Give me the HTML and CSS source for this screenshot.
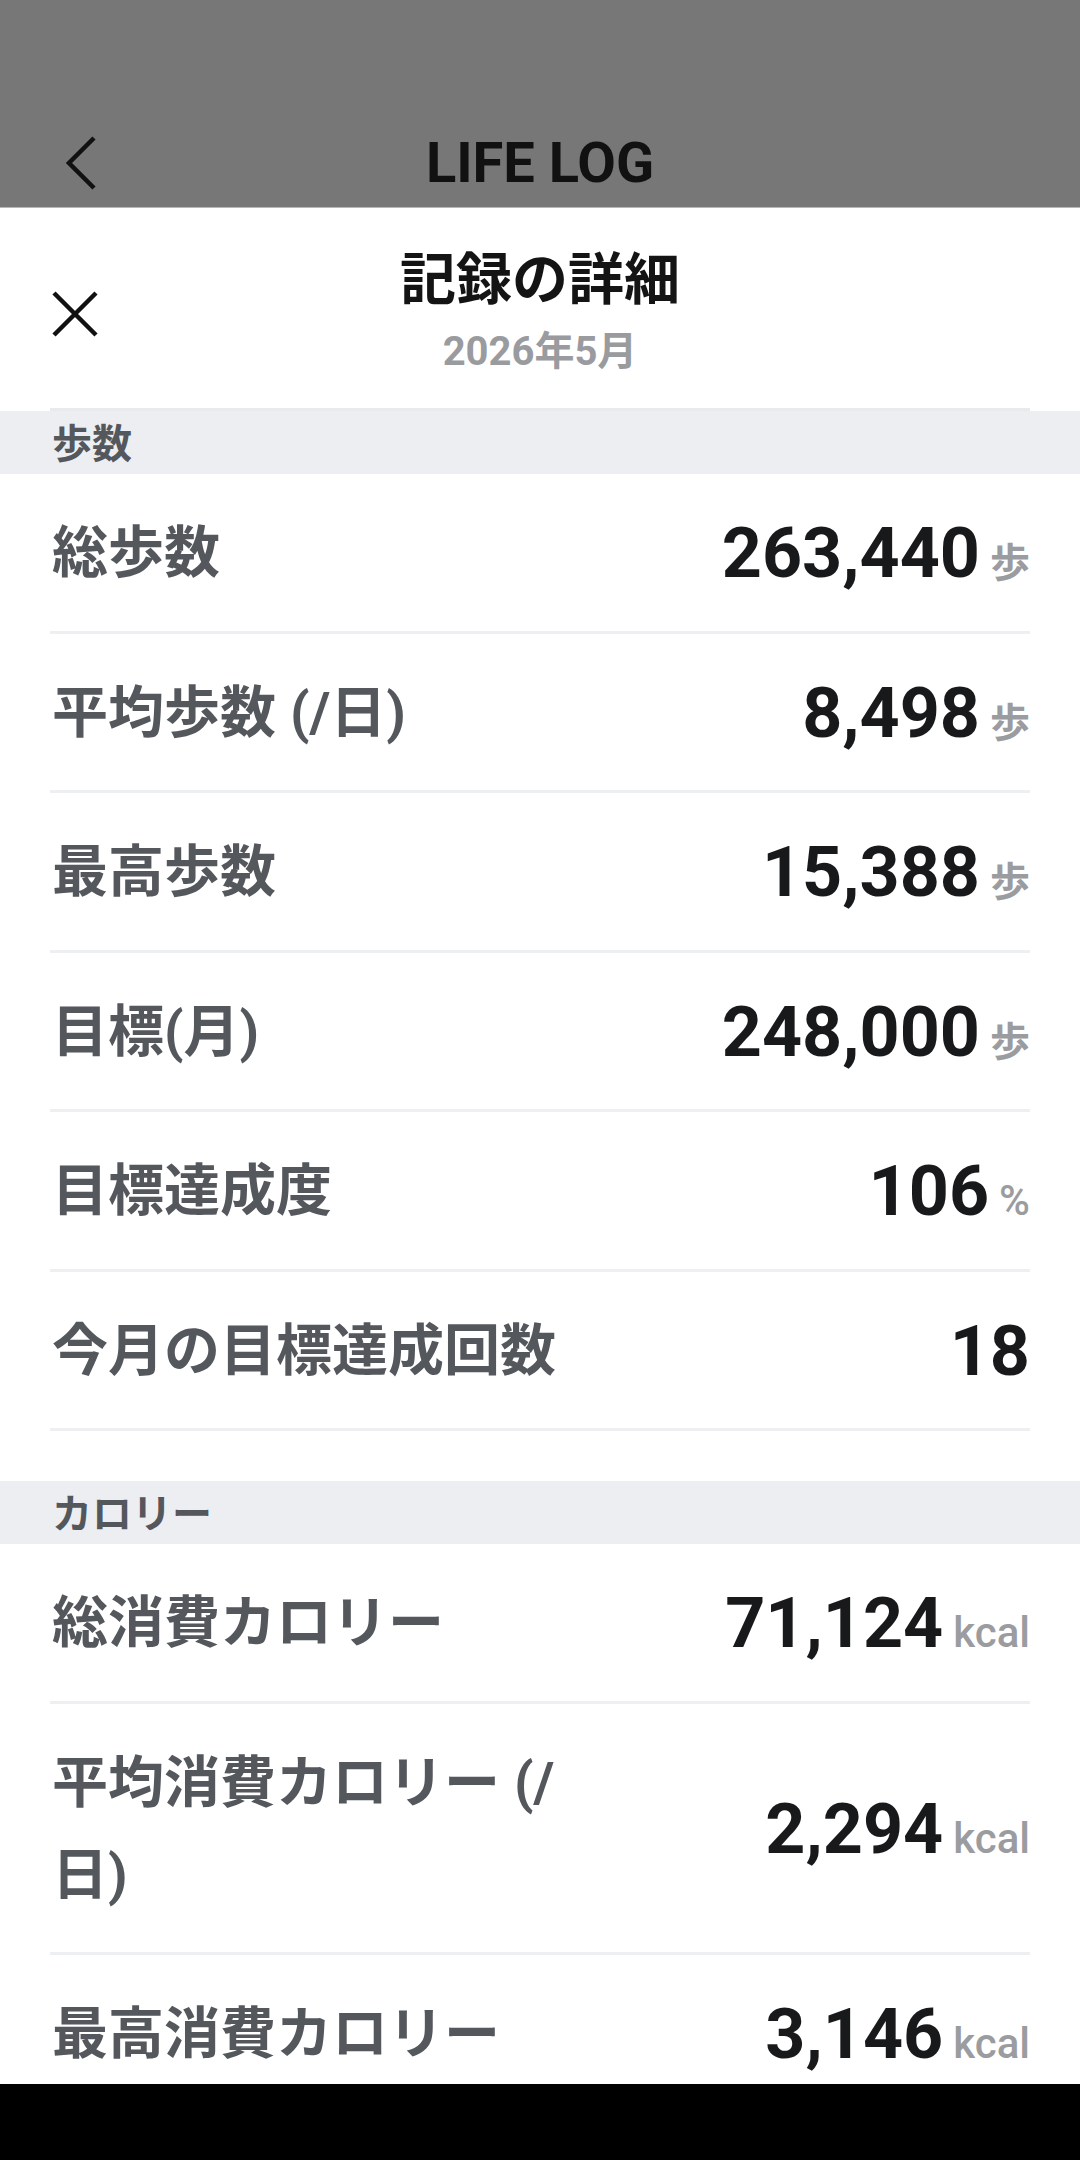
FILE: index.html
```html
<!DOCTYPE html>
<html lang="ja">
<head>
<meta charset="utf-8">
<title>記録の詳細</title>
<link rel="stylesheet" href="styles.css">
</head>
<body>
<div class="screen">
  <header class="appbar">
    <div class="toolbar">
      <span class="back">
        <svg width="32" height="54" viewBox="0 0 32 54"><path d="M29 2 L4 27 L29 52" fill="none" stroke="#111" stroke-width="4.5"/></svg>
      </span>
      <span class="apptitle">LIFE LOG</span>
      <span></span>
    </div>
  </header>

  <main class="sheet">
    <div class="sheet-head">
      <span class="close">
        <svg width="48" height="48" viewBox="0 0 48 48"><path d="M3 3 L45 45 M45 3 L3 45" fill="none" stroke="#111" stroke-width="4.5"/></svg>
      </span>
      <div class="heading">
        <div class="title">記録の詳細</div>
        <div class="date">2026年5月</div>
      </div>
      <span></span>
    </div>
    <div class="head-rule"></div>

    <section class="group">
      <div class="band">歩数</div>
      <div class="row"><span class="label">総歩数</span><span class="val"><b>263,440</b><i>歩</i></span></div>
      <div class="row"><span class="label">平均歩数 (/日)</span><span class="val"><b>8,498</b><i>歩</i></span></div>
      <div class="row"><span class="label">最高歩数</span><span class="val"><b>15,388</b><i>歩</i></span></div>
      <div class="row"><span class="label">目標(月)</span><span class="val"><b>248,000</b><i>歩</i></span></div>
      <div class="row"><span class="label">目標達成度</span><span class="val"><b>106</b><i class="latin">%</i></span></div>
      <div class="row"><span class="label">今月の目標達成回数</span><span class="val"><b>18</b></span></div>
    </section>

    <section class="group">
      <div class="band">カロリー</div>
      <div class="row"><span class="label">総消費カロリー</span><span class="val"><b>71,124</b><i class="latin">kcal</i></span></div>
      <div class="row"><span class="label">平均消費カロリー (/日)</span><span class="val"><b>2,294</b><i class="latin">kcal</i></span></div>
      <div class="row"><span class="label">最高消費カロリー</span><span class="val"><b>3,146</b><i class="latin">kcal</i></span></div>
    </section>
  </main>

  <nav class="navbar"></nav>
</div>
</body>
</html>
```

FILE: styles.css
```css
* { box-sizing: border-box; }

html, body {
  margin: 0;
  padding: 0;
  background: #ffffff;
}

body {
  font-family: "Roboto", "Noto Sans CJK JP", sans-serif;
}

.screen {
  position: relative;
  width: 1080px;
  height: 2160px;
  overflow: hidden;
  display: flex;
  flex-direction: column;
}

.appbar {
  height: 208px;
  background: #777777;
  padding-top: 118px;
  border-bottom: 1px solid #b8b8b8;
}

.toolbar {
  height: 90px;
  display: grid;
  grid-template-columns: 1fr auto 1fr;
  align-items: center;
}

.back {
  display: flex;
  margin-left: 65px;
}

.apptitle {
  font-family: "Roboto", sans-serif;
  font-weight: 700;
  font-size: 56px;
  color: #111111;
  letter-spacing: 0;
}

.sheet {
  flex: 1;
  background: #ffffff;
}

.sheet-head {
  display: grid;
  grid-template-columns: 1fr auto 1fr;
  align-items: center;
  padding: 37px 0 28px;
}

.close {
  display: flex;
  margin-left: 51px;
  margin-top: 2px;
}

.heading {
  text-align: center;
}

.title {
  font-weight: 700;
  font-size: 56px;
  line-height: 70px;
  color: #141414;
}

.date {
  margin-top: 9px;
  font-weight: 700;
  font-size: 40px;
  line-height: 56px;
  color: #9a9b9f;
}

.head-rule {
  height: 3px;
  margin: 0 50px;
  background: #e9eaed;
}

.group + .group {
  margin-top: 50px;
}

.band {
  background: #edeef1;
  height: 63px;
  padding: 5px 52px 0;
  font-weight: 700;
  font-size: 40px;
  line-height: 58px;
  color: #54575c;
}

.row {
  display: flex;
  align-items: center;
  justify-content: space-between;
  margin: 0 50px;
  padding: 33px 0 31.5px 2px;
  border-bottom: 3px solid #eeeff2;
}

.label {
  width: 540px;
  font-weight: 700;
  font-size: 56px;
  line-height: 92px;
  color: #54575c;
}

.val {
  display: flex;
  align-items: baseline;
  gap: 10px;
}

.val b {
  font-family: "Roboto", sans-serif;
  font-weight: 700;
  font-size: 70px;
  line-height: 92px;
  color: #18191b;
}

.val i {
  font-style: normal;
  font-weight: 700;
  font-size: 40px;
  color: #9b9ca0;
}

.val i.latin {
  font-family: "Roboto", sans-serif;
  font-weight: 500;
  font-size: 42px;
}

.navbar {
  position: absolute;
  left: 0;
  right: 0;
  bottom: 0;
  height: 76px;
  background: #000000;
}
```
